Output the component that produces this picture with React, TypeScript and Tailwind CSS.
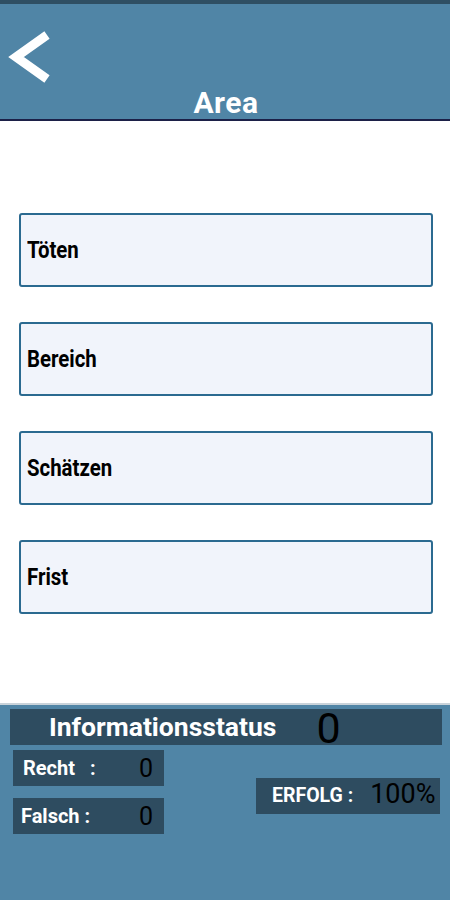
import React from "react";

const items = ["Töten", "Bereich", "Schätzen", "Frist"];

export default function App() {
  return (
    <div className="w-[450px] h-[900px] bg-white flex flex-col overflow-hidden" style={{ fontFamily: "Roboto, 'Noto Sans', sans-serif" }}>
      <div className="h-[4px] bg-[#2f4f63]" />
      <div className="relative h-[115px] bg-[#5085a6] flex items-end justify-center">
        <svg className="absolute left-[8px] top-[27px]" width="44" height="52" viewBox="0 0 44 52">
          <path d="M39 4 L8 26 L39 48" fill="none" stroke="white" strokeWidth="9" strokeLinecap="butt" strokeLinejoin="miter" />
        </svg>
        <span className="text-white font-bold text-[30px] leading-none mb-[1px] ml-[2px] tracking-[0.5px]">Area</span>
      </div>
      <div className="h-[2px] bg-[#1c2048]" />
      <div className="flex flex-col gap-[35px] px-[19px] pt-[92px] pr-[17px]">
        {items.map((t) => (
          <div key={t} className="h-[74px] border-2 border-[#2b6a90] rounded-[3px] bg-[#f1f4fb] flex items-center pl-[6px]">
            <span className="text-[24px] font-bold text-black scale-x-[0.85] origin-left inline-block">{t}</span>
          </div>
        ))}
      </div>
      <div className="flex-1" />
      <div className="h-[197px] bg-[#5085a6] border-t-2 border-[#c9d3da] flex flex-col pl-[10px] pr-[8px] pt-[4px]">
        <div className="h-[36px] bg-[#2e4c60] flex items-center">
          <span className="text-white font-bold text-[26.5px] leading-none ml-[39px]">Informationsstatus</span>
          <span className="text-black text-[43px] leading-none ml-[40px] mt-[2px]">0</span>
        </div>
        <div className="flex">
          <div className="flex flex-col gap-[12px] mt-[5px] ml-[3px]">
            <div className="w-[151px] h-[36px] bg-[#2e4c60] flex items-center justify-between pl-[10px] pr-[11px]">
              <span className="text-white font-bold text-[20px]">Recht&nbsp;&nbsp;&nbsp;:</span>
              <span className="text-black text-[25px] leading-none">0</span>
            </div>
            <div className="w-[151px] h-[36px] bg-[#2e4c60] flex items-center justify-between pl-[8px] pr-[11px]">
              <span className="text-white font-bold text-[20px]">Falsch :</span>
              <span className="text-black text-[25px] leading-none">0</span>
            </div>
          </div>
          <div className="ml-[92px] mt-[33px] w-[184px] h-[36px] bg-[#2e4c60] flex items-center pl-[16px]">
            <span className="text-white font-bold text-[19.5px]">ERFOLG :</span>
            <span className="text-black text-[27px] leading-none ml-[17px] -mt-[4px]">100%</span>
          </div>
        </div>
      </div>
    </div>
  );
}
